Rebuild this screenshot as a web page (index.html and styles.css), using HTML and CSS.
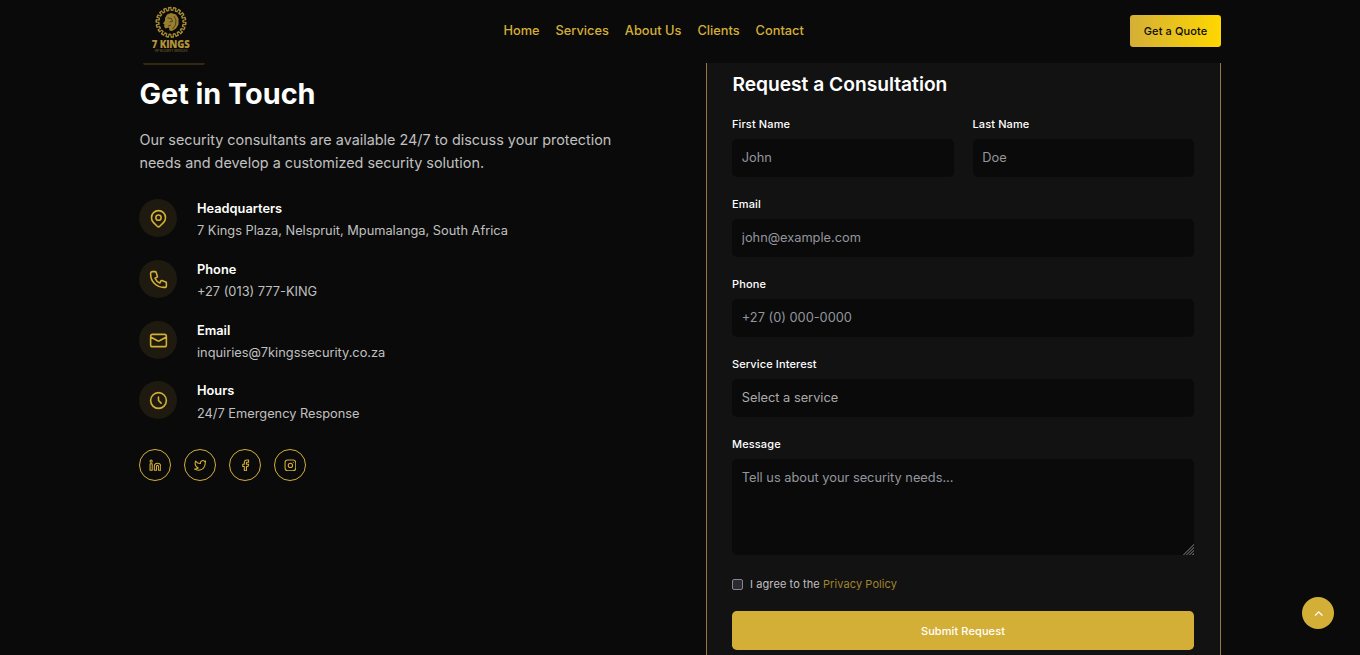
FILE: index.html
```html
<!DOCTYPE html>
<html lang="en">
<head>
<meta charset="utf-8">
<title>7 Kings Security - Contact</title>
<link rel="stylesheet" href="styles.css">
</head>
<body>
<header class="header">
  <div class="container header-inner">
    <a class="logo" href="#">
      <svg class="logo-mark" viewBox="0 0 64 64" width="64" height="64">
        <g fill="none" stroke="#a98c35">
          <circle cx="32" cy="22.300" r="14.800" pathLength="36" stroke-width="1.500" stroke-dasharray="1 1"/>
          <circle cx="32" cy="22.300" r="12.200" pathLength="36" stroke-width="1.500" stroke-dasharray="1 1" stroke-dashoffset="1"/>
          <circle cx="32" cy="22.300" r="13.500" pathLength="36" stroke-width="3.600" stroke-dasharray=".45 .55" stroke-dashoffset=".22"/>
        </g>
        <path d="M26 18l2-3.500 4-1.500 5 1.500 2.500 4v6l-2.500 4-4 2.500-2.500-.5-.5-3-3.500 1-1.500-2 .5-2-1.500-1 2-3z" fill="#9a7f31"/>
        <path d="M28.500 18l4 .5 1 3-3 .5M35 16l2 4-.5 5-3 4M29 26l3-1" fill="none" stroke="#3a3013" stroke-width=".8"/>
        <text x="31.800" y="47.900" text-anchor="middle" class="logo-name" textLength="38">7 KINGS</text>
        <text x="32" y="52" text-anchor="middle" class="logo-tag" textLength="33">VIP SECURITY SERVICES</text>
      </svg>
    </a>
    <nav class="nav">
      <a href="#">Home</a><a href="#">Services</a><a href="#">About Us</a><a href="#">Clients</a><a href="#">Contact</a>
    </nav>
    <a class="quote" href="#">Get a Quote</a>
  </div>
</header>
<main class="contact">
  <div class="container columns">
    <section class="info">
      <h2>Get in Touch</h2>
      <p class="lead">Our security consultants are available 24/7 to discuss your protection needs and develop a customized security solution.</p>
      <ul class="details">
        <li>
          <span class="badge"><svg class="icon" viewBox="0 0 24 24"><path d="M17.657 16.657L13.414 20.9a2 2 0 0 1-2.827 0l-4.244-4.243a8 8 0 1 1 11.314 0z"/><circle cx="12" cy="11" r="3"/></svg></span>
          <div><h4>Headquarters</h4><p>7 Kings Plaza, Nelspruit, Mpumalanga, South Africa</p></div>
        </li>
        <li>
          <span class="badge"><svg class="icon" viewBox="0 0 24 24"><path d="M3 5a2 2 0 0 1 2-2h3.28a1 1 0 0 1 .948.684l1.498 4.493a1 1 0 0 1-.502 1.21l-2.257 1.13a11.042 11.042 0 0 0 5.516 5.516l1.13-2.257a1 1 0 0 1 1.21-.502l4.493 1.498a1 1 0 0 1 .684.949V19a2 2 0 0 1-2 2h-1C9.716 21 3 14.284 3 6V5z"/></svg></span>
          <div><h4>Phone</h4><p>+27 (013) 777-KING</p></div>
        </li>
        <li>
          <span class="badge"><svg class="icon" viewBox="0 0 24 24"><path d="M3 8l7.89 4.26a2 2 0 0 0 2.22 0L21 8M5 19h14a2 2 0 0 0 2-2V7a2 2 0 0 0-2-2H5a2 2 0 0 0-2 2v10a2 2 0 0 0 2 2z"/></svg></span>
          <div><h4>Email</h4><p>inquiries@7kingssecurity.co.za</p></div>
        </li>
        <li>
          <span class="badge"><svg class="icon" viewBox="0 0 24 24"><path d="M12 8v4l3 3m6-3a9 9 0 1 1-18 0 9 9 0 0 1 18 0z"/></svg></span>
          <div><h4>Hours</h4><p>24/7 Emergency Response</p></div>
        </li>
      </ul>
      <div class="social">
        <a href="#"><svg viewBox="0 0 24 24"><path d="M16 8a6 6 0 0 1 6 6v7h-4v-7a2 2 0 0 0-4 0v7h-4v-7a6 6 0 0 1 6-6z"/><path d="M2 9h4v12H2z"/><circle cx="4" cy="4" r="2"/></svg></a>
        <a href="#"><svg viewBox="0 0 24 24"><path d="M23 3a10.900 10.900 0 0 1-3.140 1.530 4.480 4.480 0 0 0-7.860 3v1A10.660 10.660 0 0 1 3 4s-4 9 5 13a11.640 11.640 0 0 1-7 2c9 5 20 0 20-11.500a4.500 4.500 0 0 0-.08-.83A7.720 7.720 0 0 0 23 3z"/></svg></a>
        <a href="#"><svg viewBox="0 0 24 24"><path d="M18 2h-3a5 5 0 0 0-5 5v3H7v4h3v8h4v-8h3l1-4h-4V7a1 1 0 0 1 1-1h3z"/></svg></a>
        <a href="#"><svg viewBox="0 0 24 24"><rect x="2" y="2" width="20" height="20" rx="5"/><circle cx="12" cy="12" r="4"/><path d="M17.500 6.500h.01"/></svg></a>
      </div>
    </section>
    <form class="card">
      <h3>Request a Consultation</h3>
      <div class="row">
        <label class="field">First Name<input type="text" placeholder="John"></label>
        <label class="field">Last Name<input type="text" placeholder="Doe"></label>
      </div>
      <label class="field">Email<input type="email" placeholder="john@example.com"></label>
      <label class="field">Phone<input type="tel" placeholder="+27 (0) 000-0000"></label>
      <label class="field">Service Interest<select><option>Select a service</option></select></label>
      <label class="field">Message<textarea placeholder="Tell us about your security needs..."></textarea></label>
      <label class="agree"><input type="checkbox"><span>I agree to the <a href="#">Privacy Policy</a></span></label>
      <button class="submit" type="button">Submit Request</button>
    </form>
  </div>
</main>
<a class="to-top" href="#"><svg viewBox="0 0 24 24"><path d="M5 15l7-7 7 7"/></svg></a>
</body>
</html>
```
FILE: styles.css
```css
* { box-sizing: border-box; }
html { height: 100%; overflow: hidden; }
body {
  margin: 0;
  height: 655px;
  overflow: hidden;
  background: #0a0a0a;
  color: #fff;
  font: 12.8px/19.2px Inter, "Liberation Sans", sans-serif;
}
h2, h3, h4, p, ul { margin: 0; padding: 0; }
a { color: inherit; text-decoration: none; }
.container { width: 1082px; margin: 0 auto; }
.header { height: 63px; background: #0a0a0a; }
.header-inner { display: grid; grid-template-columns: 364.4px 1fr 91px; align-items: start; }
.logo {
  width: 62px;
  height: 65px;
  margin-left: 4px;
  border-bottom: 2px solid #33290f;
  border-radius: 2px;
}
.logo-mark { display: block; margin-left: -4px; }
.logo-name { font: 800 9.6px "Open Sans", Inter, sans-serif; fill: #b39338; }
.logo-tag { font: 500 3.2px Inter, sans-serif; fill: #6d5923; }
.nav { display: flex; gap: 16px; padding-top: 21px; color: #d4af37; font-weight: 500; }
.quote {
  height: 32px;
  margin-top: 15px;
  border-radius: 3.2px;
  background: linear-gradient(90deg, #d4af37, #ffd700);
  color: #0a0a0a;
  font-size: 11px;
  letter-spacing: .1px;
  font-weight: 500;
  line-height: 32px;
  text-align: center;
}
.contact { height: 587px; }
.columns { display: grid; grid-template-columns: 515px 515px; gap: 52px; }
.info { padding-top: 13px; }
.info h2 { font-size: 28.8px; line-height: 36px; font-weight: 700; margin-bottom: 16.4px; padding-left: .4px; }
.lead { font-size: 14.4px; line-height: 23px; color: #c0c0c0; margin-bottom: 24.6px; padding-left: .4px; }
.details { list-style: none; display: flex; flex-direction: column; gap: 19.2px; }
.details li { display: flex; gap: 20px; height: 41.6px; }
.badge {
  flex: none;
  display: grid;
  place-items: center;
  width: 38px;
  height: 38px;
  border-radius: 50%;
  background: #1e1a0f;
}
.icon { width: 21px; height: 21px; margin-left: 1px; margin-top: 1px; }
svg { fill: none; stroke: #d4af37; stroke-width: 2; stroke-linecap: round; stroke-linejoin: round; }
.icon { stroke-width: 1.8; }
.logo-mark { stroke: none; stroke-linecap: butt; }
.details h4 { font-size: 12.8px; line-height: 19.2px; font-weight: 600; margin-bottom: 3.2px; }
.details p { color: #c0c0c0; line-height: 19.2px; }
.social { display: flex; gap: 13px; margin-top: 26px; }
.social a {
  display: grid;
  place-items: center;
  width: 32px;
  height: 32px;
  border: 1px solid #d4af37;
  border-radius: 50%;
}
.social svg { width: 12.8px; height: 12.8px; }
.card {
  height: 592px;
  padding: 8px 26px 0 25px;
  background: #121212;
  border: solid #967549;
  border-width: 0 1px;
}
.card h3 { font-size: 19.2px; line-height: 26px; font-weight: 600; margin-bottom: 19px; padding-left: .4px; }
.row { display: grid; grid-template-columns: 1fr 1fr; gap: 19px; }
.field { display: block; margin-bottom: 19px; font-size: 11px; letter-spacing: .12px; line-height: 16px; font-weight: 500; }
.field input, .field select, .field textarea {
  display: block;
  appearance: none;
  width: 100%;
  height: 38px;
  margin: 7px 0 0;
  padding: 0 9.8px 2px;
  border: 0;
  border-radius: 4.8px;
  background: #0a0a0a;
  color: #a9a9ab;
  font: 400 12.8px/19.2px Inter, sans-serif;
  letter-spacing: 0;
}
.field select { padding-bottom: 0; }
.field textarea { height: 96px; padding-top: 8.8px; resize: vertical; }
.field textarea::-webkit-resizer {
  background: linear-gradient(135deg, transparent 7.5px, #555 7.8px, #555 8.4px, transparent 8.8px, transparent 9.6px, #555 9.9px, #555 10.5px, transparent 10.9px, transparent 11.700px, #555 12px, #555 12.600px, transparent 13px, transparent 13.800px, #555 14.100px) right bottom / 11px 11px no-repeat;
}
::placeholder { color: #93969d; opacity: 1; }
.agree { display: flex; align-items: center; gap: 7px; margin-top: 21px; height: 16px; font-size: 11px; letter-spacing: .09px; color: #c0c0c0; }
.agree span { padding-top: 1.4px; }
.agree input {
  appearance: none;
  width: 11px;
  height: 11px;
  margin: 0;
  border: 1px solid #85858f;
  border-radius: 2px;
  background: #2b2a33;
}
.agree a { color: #a0842c; }
.submit {
  display: block;
  width: 100%;
  height: 39px;
  margin-top: 19px;
  padding: 1px 0 0;
  border: 0;
  border-radius: 4.8px;
  background: #d4af37;
  color: #fff;
  font: 500 11px/38px Inter, sans-serif;
  letter-spacing: .1px;
}
.to-top {
  position: fixed;
  right: 26px;
  bottom: 26px;
  display: grid;
  place-items: center;
  width: 32px;
  height: 32px;
  border-radius: 50%;
  background: #d4af37;
}
.to-top svg { width: 11.5px; height: 11.5px; margin-top: 1px; margin-left: 1px; stroke: #fff; stroke-width: 2.6; }
```
